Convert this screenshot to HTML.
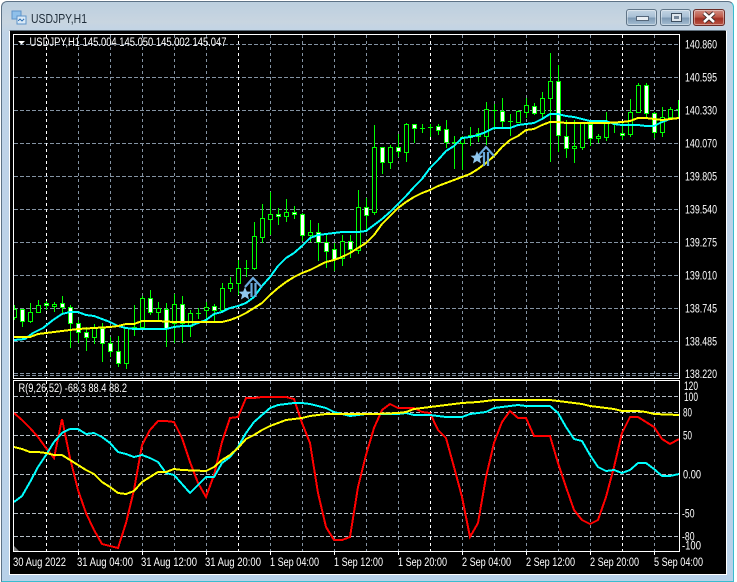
<!DOCTYPE html>
<html><head><meta charset="utf-8"><style>
html,body{margin:0;padding:0;background:#fff}
#w{position:relative;width:737px;height:582px;overflow:hidden;background:#fff}
#f{position:absolute;left:1px;top:1px;width:733px;height:581px;box-sizing:border-box;border:1px solid #5d7286;border-bottom:1px solid #38bccf;border-right:1px solid #38bccf;border-radius:6px 6px 0 0;background:linear-gradient(#bccfdf 0,#c8d5e0 20px,#bfd3e7 32px,#b8d1e9 100%)}
#c{position:absolute;left:9px;top:30px;width:718px;height:545px;box-sizing:border-box;border-left:1px solid #fff;border-right:2px solid #fff;border-bottom:1px solid #fff;border-top:1px solid #5e6d7a}
svg{position:absolute;left:0;top:0}
text{font-family:"Liberation Sans",sans-serif}
.b{position:absolute;top:9px;height:17px;box-sizing:border-box;border:1px solid #5f7487;border-radius:3px;background:linear-gradient(#c3d4e3 0,#a9c0d5 45%,#7f9bb5 55%,#a5bdd2 100%);box-shadow:inset 0 0 0 1px rgba(255,255,255,.4)}
</style></head><body><div id="w">
<div id="f"></div><div id="c"></div>
<div class="b" style="left:626px;width:31px"><div style="position:absolute;left:9px;top:6px;width:11px;height:3px;background:#e9eef3;border:1px solid #56677a"></div></div>
<div class="b" style="left:660px;width:31px"><div style="position:absolute;left:10px;top:3px;width:9px;height:7px;border:1px solid #3e4f60;background:#dfe7ee"><div style="position:absolute;left:2px;top:2px;width:5px;height:3px;background:#76879a"></div></div></div>
<div class="b" style="left:693px;width:32px;border-color:#6b2c28;background:linear-gradient(#d08f85 0,#bf5a4a 45%,#a03024 58%,#bb5443 100%)"><svg width="30" height="15"><path d="M10 3l10 9M20 3l-10 9" stroke="#3c2a2a" stroke-width="4.5"/><path d="M10 3l10 9M20 3l-10 9" stroke="#fff" stroke-width="2.6"/></svg></div>
<svg width="737" height="582" viewBox="0 0 737 582">
<defs><clipPath id="a"><rect x="14" y="35" width="665" height="343"/></clipPath><clipPath id="b"><rect x="14" y="381" width="665" height="170"/></clipPath></defs>
<g shape-rendering="crispEdges">
<rect x="12" y="11" width="9" height="8" fill="#8fc0ea" stroke="#5d93c9"/><rect x="17" y="16" width="9" height="8" fill="#dbeaf7" stroke="#5d93c9"/>
<path d="M18 21l2-2 2 2 2-2" stroke="#3a78b8" fill="none"/>
</g>
<text x="31" y="23" font-size="12.5" fill="#1f2d3a" textLength="56" lengthAdjust="spacingAndGlyphs">USDJPY,H1</text>
<rect x="10" y="31" width="716" height="543" fill="#000"/>
<g clip-path="url(#a)" shape-rendering="crispEdges" fill="none">
<path d="M14 44.5H679M14 77.5H679M14 110.5H679M14 143.5H679M14 176.5H679M14 209.5H679M14 242.5H679M14 275.5H679M14 308.5H679M14 341.5H679M14 373.5H679M14 375.5H679" stroke="#8493a3" stroke-dasharray="4 2"/>
<path d="M78.5 35V378M110.5 35V378M142.5 35V378M174.5 35V378M206.5 35V378M270.5 35V378M302.5 35V378M334.5 35V378M366.5 35V378M398.5 35V378M462.5 35V378M494.5 35V378M526.5 35V378M558.5 35V378M590.5 35V378M654.5 35V378" stroke="#8493a3" stroke-dasharray="3 3"/>
<path d="M46.5 35V378M238.5 35V378M430.5 35V378M622.5 35V378" stroke="#fff" stroke-dasharray="3 3"/>
<path stroke="#0f0" d="M14.5 305V320M22.5 309V327M30.5 303V323M38.5 300V313M46.5 301V310M54.5 302V312M62.5 296V313M70.5 305V348M78.5 320V343M86.5 327V351M94.5 324V344M102.5 323V362M110.5 337V357M118.5 336V367M126.5 327V369M134.5 305V336M142.5 296V328M150.5 290V315M158.5 302V322M166.5 303V347M174.5 294V343M182.5 296V343M190.5 310V337M198.5 308V319M206.5 302V323M214.5 304V323M222.5 283V313M230.5 277V292M238.5 260V295M246.5 260V277M254.5 222V270M262.5 204V243M270.5 192V235M278.5 208V225M286.5 199V222M294.5 206V219M302.5 213V241M310.5 220V242M318.5 223V261M326.5 235V268M334.5 243V271M342.5 235V266M350.5 235V258M358.5 190V254M366.5 198V232M374.5 125V215M382.5 147V174M390.5 145V169M398.5 134V157M406.5 123V162M414.5 124V143M422.5 124V133M430.5 124V137M438.5 124V135M446.5 120V148M454.5 136V169M462.5 136V170M470.5 127V146M478.5 128V142M486.5 102V145M494.5 104V130M502.5 98V127M510.5 114V136M518.5 110V123M526.5 98V118M534.5 103V115M542.5 92V120M550.5 53V162M558.5 65V152M566.5 120V158M574.5 120V163M582.5 122V150M590.5 123V146M598.5 134V143M606.5 112V141M614.5 122V133M622.5 122V140M630.5 99V137M638.5 83V113M646.5 83V119M654.5 112V138M662.5 107V137M670.5 107V118M678.5 100V119"/>
<path stroke="#0f0" d="M132 327.5h5M196 313.5h5M244 268.5h5M420 128.5h5M428 127.5h5M452 142.5h5M492 110.5h5M508 121.5h5M612 123.5h5M676 109.5h5"/>
<path stroke="#0f0" fill="#000" d="M12.5 309.5h4v8h-4zM28.5 312.5h4v9h-4zM36.5 305.5h4v7h-4zM52.5 304.5h4v2h-4zM92.5 328.5h4v9h-4zM124.5 328.5h4v35h-4zM140.5 298.5h4v29h-4zM156.5 308.5h4v4h-4zM172.5 304.5h4v19h-4zM188.5 313.5h4v13h-4zM204.5 307.5h4v3h-4zM220.5 288.5h4v22h-4zM228.5 283.5h4v5h-4zM236.5 268.5h4v15h-4zM252.5 236.5h4v32h-4zM260.5 218.5h4v19h-4zM268.5 214.5h4v5h-4zM284.5 212.5h4v4h-4zM308.5 232.5h4v3h-4zM340.5 241.5h4v17h-4zM356.5 207.5h4v43h-4zM372.5 147.5h4v65h-4zM388.5 147.5h4v15h-4zM404.5 124.5h4v28h-4zM460.5 137.5h4v6h-4zM468.5 135.5h4v2h-4zM476.5 133.5h4v3h-4zM484.5 109.5h4v27h-4zM516.5 111.5h4v11h-4zM524.5 105.5h4v7h-4zM540.5 98.5h4v15h-4zM548.5 81.5h4v17h-4zM572.5 146.5h4v2h-4zM580.5 123.5h4v24h-4zM596.5 136.5h4v2h-4zM604.5 123.5h4v14h-4zM628.5 112.5h4v22h-4zM636.5 85.5h4v27h-4zM660.5 117.5h4v15h-4zM668.5 109.5h4v8h-4z"/>
<path stroke="#0f0" fill="#fff" d="M20.5 309.5h4v12h-4zM44.5 303.5h4v2h-4zM60.5 303.5h4v4h-4zM68.5 307.5h4v16h-4zM76.5 323.5h4v9h-4zM84.5 332.5h4v5h-4zM100.5 328.5h4v15h-4zM108.5 343.5h4v8h-4zM116.5 351.5h4v12h-4zM148.5 298.5h4v14h-4zM164.5 309.5h4v19h-4zM180.5 304.5h4v19h-4zM212.5 306.5h4v4h-4zM276.5 214.5h4v2h-4zM292.5 212.5h4v2h-4zM300.5 214.5h4v21h-4zM316.5 232.5h4v10h-4zM324.5 242.5h4v9h-4zM332.5 249.5h4v10h-4zM348.5 241.5h4v8h-4zM364.5 207.5h4v8h-4zM380.5 147.5h4v15h-4zM396.5 147.5h4v4h-4zM412.5 124.5h4v4h-4zM436.5 126.5h4v4h-4zM444.5 129.5h4v13h-4zM500.5 111.5h4v10h-4zM532.5 106.5h4v7h-4zM556.5 81.5h4v54h-4zM564.5 136.5h4v12h-4zM588.5 124.5h4v14h-4zM620.5 133.5h4v2h-4zM644.5 85.5h4v28h-4zM652.5 113.5h4v19h-4z"/>
<polyline stroke="#0ff" stroke-width="2" points="14,340 25,339 33,333 43,328 53,320 62,314 70,312 78,312 86,315 94,316 102,319 110,322 118,326 126,328 134,329 166,329 174,327 182,326 190,326 198,323 206,320 214,314 222,312 230,308 238,306 246,303 254,297 262,286 270,277 278,266 286,258 294,253 302,246 310,238 318,235 326,234 334,233 342,232 358,232 366,231 374,225 382,219 390,212 398,204 406,196 414,187 422,179 430,168 438,160 446,151 454,146 462,138 470,137 478,135 486,132 494,128 510,128 518,125 526,124 534,123 542,119 550,114 558,114 566,116 574,117 582,119 590,121 606,121 614,124 622,125 638,125 646,126 654,126 662,122 670,119 679,118"/>
<polyline stroke="#ff0" stroke-width="2" points="14,337 30,337 38,334 46,333 62,331 78,329 94,328 110,327 118,326 126,324 134,324 142,321 158,321 174,322 222,322 230,320 238,317 246,313 254,308 262,303 270,295 278,288 286,282 294,277 302,273 310,270 318,266 326,262 334,260 342,257 350,253 358,248 366,243 374,235 382,224 390,216 398,208 406,202 414,197 422,193 430,190 438,186 446,183 454,180 462,177 470,174 478,169 486,163 494,156 502,147 510,140 518,136 526,130 534,129 542,125 550,122 558,122 566,123 606,123 622,122 630,121 638,118 646,118 654,119 662,120 670,119 679,118"/>
</g>
<g fill="none" stroke="#6ba9dc" stroke-width="2.2">
<path d="M245 287l8-9 8.5 9"/><path d="M251.5 283V297M255.5 283V297"/>
<path d="M478 156l8-9 8 9"/><path d="M484 152V166M488 152V166"/>
</g>
<path d="M245 287l1.8 4.5 4.7.3-3.6 3 1.2 4.7-4.1-2.6-4.1 2.6 1.2-4.7-3.6-3 4.7-.3z" fill="#8fc6ec"/>
<path d="M477 151l1.8 4.5 4.7.3-3.6 3 1.2 4.7-4.1-2.6-4.1 2.6 1.2-4.7-3.6-3 4.7-.3z" fill="#8fc6ec"/>
<g clip-path="url(#b)" shape-rendering="crispEdges" fill="none">
<path d="M14 396.5H679M14 412.5H679M14 435.5H679M14 474.5H679M14 513.5H679M14 536.5H679" stroke="#b4bcc4" stroke-dasharray="4 2"/>
<path d="M78.5 381V551M110.5 381V551M142.5 381V551M174.5 381V551M206.5 381V551M270.5 381V551M302.5 381V551M334.5 381V551M366.5 381V551M398.5 381V551M462.5 381V551M494.5 381V551M526.5 381V551M558.5 381V551M590.5 381V551M654.5 381V551" stroke="#8493a3" stroke-dasharray="3 3"/>
<path d="M46.5 381V551M238.5 381V551M430.5 381V551M622.5 381V551" stroke="#fff" stroke-dasharray="3 3"/>
<polyline stroke="#f00" stroke-width="2" points="14,413 22,420 30,428 38,437 46,448 54,458 62,419 70,458 78,490 86,513 94,530 102,544 110,546 118,548 126,523 134,490 142,445 150,430 158,421 166,421 174,422 182,438 190,462 198,483 206,497 214,475 222,442 230,418 238,417 246,398 254,398 262,397 286,397 294,399 302,423 310,443 318,493 326,527 334,540 342,540 350,537 358,487 366,455 374,428 382,410 390,404 398,408 414,408 422,412 430,413 438,430 446,438 454,467 462,497 470,537 478,523 486,477 494,443 502,422 510,411 518,418 526,418 534,436 550,436 558,463 566,487 574,510 582,520 590,524 598,520 606,497 614,467 622,433 630,417 638,417 646,422 654,427 662,439 670,444 679,439"/>
<polyline stroke="#0ff" stroke-width="2" points="14,502 22,496 30,482 38,467 46,455 54,442 62,433 70,429 78,429 86,434 94,433 102,437 110,443 118,452 126,454 134,457 142,455 150,458 158,462 166,473 174,475 182,484 190,493 198,485 206,477 214,477 222,463 230,457 238,447 246,433 254,422 262,415 270,408 278,405 286,404 294,403 302,403 310,404 318,406 326,408 334,412 342,414 350,416 358,415 366,414 398,414 406,413 414,415 430,415 438,416 446,417 462,417 470,414 478,413 486,412 494,408 510,406 518,405 526,406 550,406 558,413 566,427 574,439 582,441 590,455 598,467 606,471 614,470 622,473 630,470 638,463 646,463 654,469 662,476 670,476 679,474"/>
<polyline stroke="#ff0" stroke-width="2" points="14,447 22,449 30,452 38,452 46,453 54,455 62,455 70,460 78,465 86,470 94,474 102,482 110,487 118,493 126,494 134,491 142,482 150,477 158,472 166,472 174,469 182,470 206,471 214,467 222,460 230,455 238,448 246,439 254,435 262,430 270,426 278,423 286,420 294,419 302,418 310,416 318,415 326,414 374,414 398,413 406,412 414,409 430,407 446,405 462,403 478,402 494,400 550,400 558,401 566,402 582,404 590,406 606,408 614,409 622,411 638,411 646,412 654,414 679,415"/>
</g>
<g shape-rendering="crispEdges" fill="none" stroke="#fff">
<path d="M13.5 34.5H679.5V378.5H13.5Z"/><path d="M13.5 380.5H679.5V551.5H13.5Z"/>
<path d="M78.5 552v3M142.5 552v3M206.5 552v3M270.5 552v3M334.5 552v3M398.5 552v3M462.5 552v3M526.5 552v3M590.5 552v3M654.5 552v3"/>
</g>
<path d="M14 551v-5l5 5z" fill="#777"/>
<path d="M18 41h7l-3.5 3.5z" fill="#fff"/>
<g fill="#fff" font-size="11.5">
<text x="29.5" y="46" textLength="197" lengthAdjust="spacingAndGlyphs">USDJPY,H1  145.004 145.050 145.002 145.047</text>
<text x="18.5" y="392" textLength="108.5" lengthAdjust="spacingAndGlyphs">R(9,26,52) -68.3 88.4 88.2</text>
<text x="685" y="48.5" textLength="32" lengthAdjust="spacingAndGlyphs">140.860</text>
<text x="685" y="81.5" textLength="32" lengthAdjust="spacingAndGlyphs">140.595</text>
<text x="685" y="114.5" textLength="32" lengthAdjust="spacingAndGlyphs">140.330</text>
<text x="685" y="147.5" textLength="32" lengthAdjust="spacingAndGlyphs">140.070</text>
<text x="685" y="180.5" textLength="32" lengthAdjust="spacingAndGlyphs">139.805</text>
<text x="685" y="213.5" textLength="32" lengthAdjust="spacingAndGlyphs">139.540</text>
<text x="685" y="246.5" textLength="32" lengthAdjust="spacingAndGlyphs">139.275</text>
<text x="685" y="279.5" textLength="32" lengthAdjust="spacingAndGlyphs">139.010</text>
<text x="685" y="312.5" textLength="32" lengthAdjust="spacingAndGlyphs">138.745</text>
<text x="685" y="345.5" textLength="32" lengthAdjust="spacingAndGlyphs">138.485</text>
<text x="685" y="378" textLength="32" lengthAdjust="spacingAndGlyphs">138.220</text>
<text x="684" y="390" textLength="14" lengthAdjust="spacingAndGlyphs">120</text>
<text x="684" y="401" textLength="14" lengthAdjust="spacingAndGlyphs">100</text>
<text x="683" y="416.5" textLength="9" lengthAdjust="spacingAndGlyphs">80</text>
<text x="683" y="439.5" textLength="9" lengthAdjust="spacingAndGlyphs">50</text>
<text x="683" y="478.5" textLength="18" lengthAdjust="spacingAndGlyphs">0.00</text>
<text x="682" y="517.5" textLength="12.5" lengthAdjust="spacingAndGlyphs">-50</text>
<text x="682" y="540.5" textLength="12.5" lengthAdjust="spacingAndGlyphs">-80</text>
<text x="682" y="549.5" textLength="19" lengthAdjust="spacingAndGlyphs">-100</text>
<text x="13" y="566" textLength="53" lengthAdjust="spacingAndGlyphs">30 Aug 2022</text>
<text x="77" y="566" textLength="56" lengthAdjust="spacingAndGlyphs">31 Aug 04:00</text>
<text x="141" y="566" textLength="56" lengthAdjust="spacingAndGlyphs">31 Aug 12:00</text>
<text x="205" y="566" textLength="56" lengthAdjust="spacingAndGlyphs">31 Aug 20:00</text>
<text x="270" y="566" textLength="49" lengthAdjust="spacingAndGlyphs">1 Sep 04:00</text>
<text x="334" y="566" textLength="49" lengthAdjust="spacingAndGlyphs">1 Sep 12:00</text>
<text x="398" y="566" textLength="49" lengthAdjust="spacingAndGlyphs">1 Sep 20:00</text>
<text x="462" y="566" textLength="49" lengthAdjust="spacingAndGlyphs">2 Sep 04:00</text>
<text x="526" y="566" textLength="49" lengthAdjust="spacingAndGlyphs">2 Sep 12:00</text>
<text x="590" y="566" textLength="49" lengthAdjust="spacingAndGlyphs">2 Sep 20:00</text>
<text x="654" y="566" textLength="49" lengthAdjust="spacingAndGlyphs">5 Sep 04:00</text>
</g>
</svg>
</div></body></html>
